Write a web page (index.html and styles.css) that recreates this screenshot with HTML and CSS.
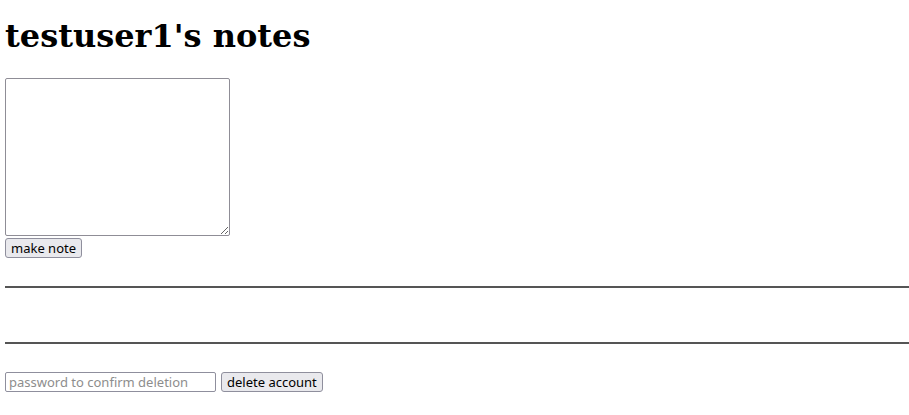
FILE: index.html
```html
<!DOCTYPE html>
<html>
<head>
<meta charset="utf-8">
<link rel="stylesheet" href="styles.css">
</head>
<body>
<h1 class="title">testuser1's notes</h1>
<form class="note-form">
<textarea class="note-input"></textarea>
<button class="btn" type="button">make note</button>
</form>
<hr class="rule">
<div class="notes"></div>
<hr class="rule">
<form class="delete-form">
<input class="pw" type="password" placeholder="password to confirm deletion">
<button class="btn" type="button">delete account</button>
</form>
</body>
</html>
```
FILE: styles.css
```css
html, body { background: #fff; }
body {
  margin: 0 0 0 5px;
  font-family: "DejaVu Serif", serif;
}
.title {
  font-family: "DejaVu Serif", serif;
  font-size: 32px;
  font-weight: bold;
  margin: 0;
  padding-top: 17px;
  height: 78px;
  box-sizing: border-box;
  line-height: 38px;
}
.note-form {
  display: flex;
  flex-direction: column;
  align-items: flex-start;
  gap: 2px;
  margin: 0;
}
.note-input {
  width: 225px;
  height: 158px;
  box-sizing: border-box;
  border: 1px solid #8f8d96;
  border-radius: 2px;
  margin: 0;
  resize: both;
}
.btn {
  font-family: "Noto Sans", sans-serif;
  font-size: 13px;
  height: 20px;
  padding: 0 5px;
  border: 1px solid #8f8f9d;
  border-radius: 3px;
  background: #e9e9ed;
  color: #000;
  line-height: 18px;
  box-sizing: border-box;
}
.rule {
  border: 0;
  border-top: 2px solid #555;
  margin: 28px 0 0 0;
  height: 0;
}
.notes { height: 0; }
.rule + .notes + .rule { margin-top: 54px; }
.delete-form {
  display: flex;
  gap: 5px;
  margin: 28px 0 0 0;
}
.pw {
  width: 211px;
  height: 20px;
  box-sizing: border-box;
  border: 1px solid #8f8f9d;
  border-radius: 2px;
  font-family: "Noto Sans", sans-serif;
  font-size: 13px;
  padding: 0 3px;
  margin: 0;
}
.pw::placeholder { color: #8d8d8d; }
```
